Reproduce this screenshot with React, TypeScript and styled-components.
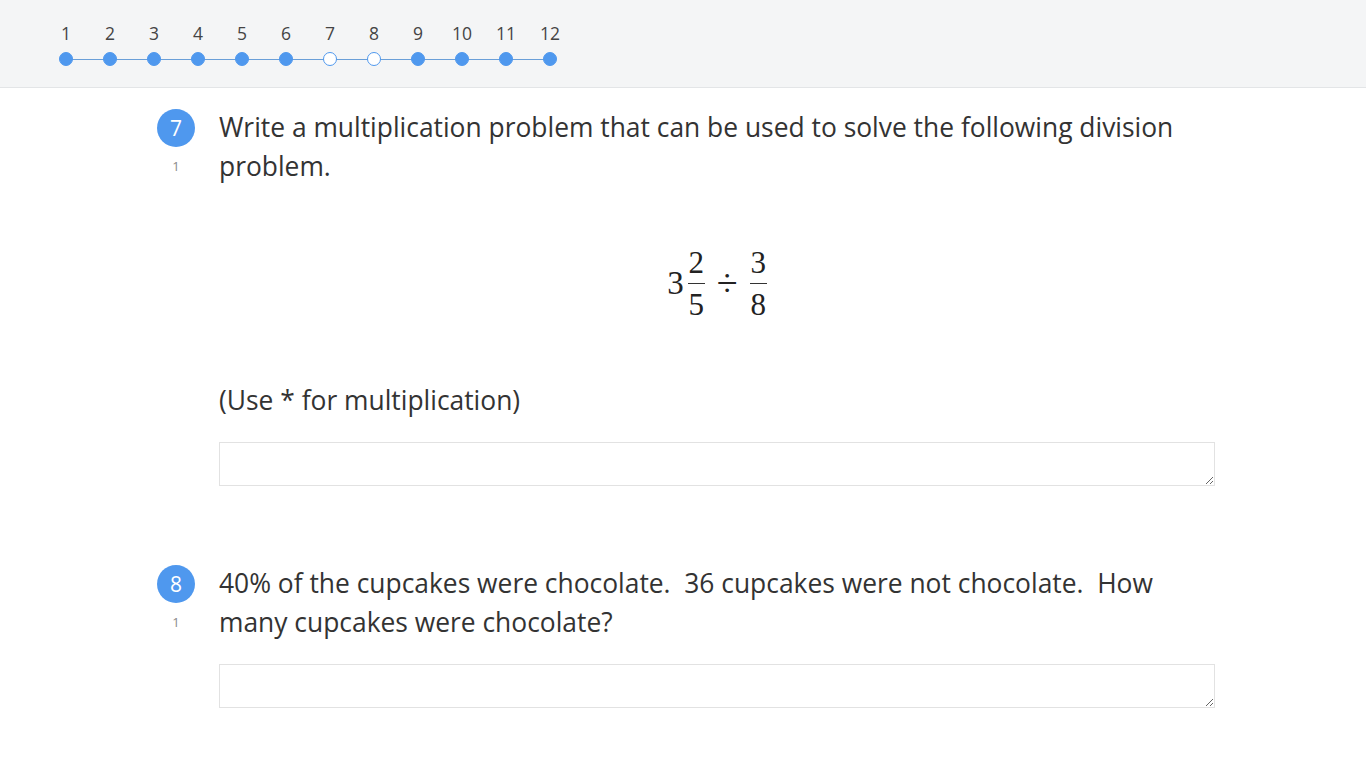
import React from "react";
import styled, { createGlobalStyle } from "styled-components";

const GlobalStyle = createGlobalStyle`
  html, body {
    margin: 0;
    padding: 0;
    background: #ffffff;
    font-family: "Open Sans", "Noto Sans", sans-serif;
    color: #333333;
  }
`;

const Header = styled.div`
  height: 88px;
  background: #f4f5f6;
  border-bottom: 1px solid #e3e5e7;
  box-sizing: border-box;
  padding: 22px 0 0 44px;
`;

const Steps = styled.div`
  display: flex;
  position: relative;
`;

const StepLine = styled.div`
  position: absolute;
  left: 22px;
  width: ${11 * 44}px;
  top: 37px;
  height: 1px;
  background: #6a9fd8;
`;

const Step = styled.div`
  width: 44px;
  display: flex;
  flex-direction: column;
  align-items: center;
  position: relative;
`;

const StepNum = styled.span`
  font-size: 17.5px;
  line-height: 22px;
  color: #444;
`;

const Dot = styled.span<{ $open?: boolean }>`
  margin-top: 8px;
  width: 14px;
  height: 14px;
  border-radius: 50%;
  box-sizing: border-box;
  background: ${(p) => (p.$open ? "#ffffff" : "#4f98ee")};
  border: 1px solid #4f98ee;
`;

const Main = styled.div`
  padding: 20px 151px 0 157px;
`;

const Question = styled.div`
  display: flex;
  margin-bottom: 78px;
`;

const Side = styled.div`
  flex-shrink: 0;
  display: flex;
  flex-direction: column;
  align-items: center;
  width: 38px;
  margin-right: 24px;
`;

const Badge = styled.div`
  width: 38px;
  height: 38px;
  border-radius: 50%;
  background: #4f98ee;
  color: #fff;
  font-size: 21px;
  display: flex;
  align-items: center;
  justify-content: center;
  margin-top: 1px;
`;

const Points = styled.div`
  font-size: 13px;
  color: #8a8a8a;
  margin-top: 10px;
`;

const Body = styled.div`
  flex: 1;
`;

const Prompt = styled.p`
  margin: 0;
  font-size: 26.4px;
  line-height: 39px;
  color: #333;
`;

const MathRow = styled.div`
  display: flex;
  justify-content: center;
  align-items: center;
  font-family: "Liberation Serif", "DejaVu Serif", serif;
  color: #222;
  margin: 57px 0 58px;
  height: 80px;
`;

const Whole = styled.span`
  font-size: 33px;
  margin-right: 4px;
`;

const Frac = styled.span`
  display: inline-flex;
  flex-direction: column;
  align-items: center;
  font-size: 31px;
  line-height: 41px;
`;

const Bar = styled.span`
  width: 17px;
  height: 1px;
  background: #333;
`;

const Divide = styled.span`
  font-size: 38px;
  margin: 0 12px 0 12px;
`;

const Note = styled.p`
  margin: 0 0 22px;
  font-size: 26.4px;
  line-height: 39px;
`;

const Answer = styled.textarea`
  display: block;
  width: 100%;
  height: 44px;
  box-sizing: border-box;
  border: 1px solid #e2e2e2;
  border-radius: 0;
  resize: vertical;
  margin-top: 22px;
  font-family: inherit;
  font-size: 18px;
`;

const steps = [1, 2, 3, 4, 5, 6, 7, 8, 9, 10, 11, 12];
const openSteps = [7, 8];

export default function App() {
  return (
    <>
      <GlobalStyle />
      <Header>
        <Steps>
          <StepLine />
          {steps.map((n) => (
            <Step key={n}>
              <StepNum>{n}</StepNum>
              <Dot $open={openSteps.includes(n)} />
            </Step>
          ))}
        </Steps>
      </Header>
      <Main>
        <Question>
          <Side>
            <Badge>7</Badge>
            <Points>1</Points>
          </Side>
          <Body>
            <Prompt>
              Write a multiplication problem that can be used to solve the following division problem.
            </Prompt>
            <MathRow>
              <Whole>3</Whole>
              <Frac>
                <span>2</span>
                <Bar />
                <span>5</span>
              </Frac>
              <Divide>÷</Divide>
              <Frac>
                <span>3</span>
                <Bar />
                <span>8</span>
              </Frac>
            </MathRow>
            <Note>(Use * for multiplication)</Note>
            <Answer />
          </Body>
        </Question>
        <Question>
          <Side>
            <Badge>8</Badge>
            <Points>1</Points>
          </Side>
          <Body>
            <Prompt>
              40% of the cupcakes were chocolate.&nbsp; 36 cupcakes were not chocolate.&nbsp; How many cupcakes were chocolate?
            </Prompt>
            <Answer />
          </Body>
        </Question>
      </Main>
    </>
  );
}
